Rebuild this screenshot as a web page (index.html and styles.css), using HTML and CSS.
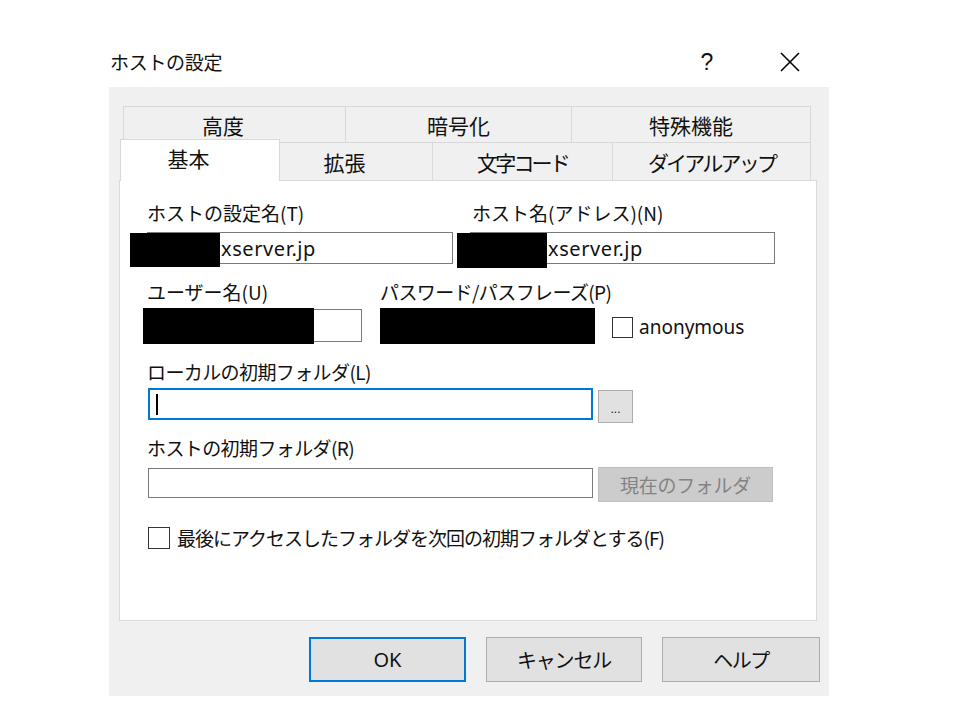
FILE: index.html
```html
<!DOCTYPE html>
<html lang="ja">
<head>
<meta charset="utf-8">
<title>ホストの設定</title>
<link rel="stylesheet" href="styles.css">
</head>
<body>
<div class="window">
  <div class="titlebar">
    <span class="title">ホストの設定</span>
    <span class="tb-help">?</span>
    <span class="tb-close"><svg width="20" height="20" viewBox="0 0 20 20"><path d="M1 1 L19 19 M19 1 L1 19" stroke="#000" stroke-width="1.6" fill="none"/></svg></span>
  </div>
  <div class="body">
    <div class="tabs">
      <div class="tabrow row1">
        <div class="tab w1a shift">高度</div>
        <div class="tab w1b">暗号化</div>
        <div class="tab w1c last">特殊機能</div>
      </div>
      <div class="tabrow row2">
        <div class="tab sel w2a shift">基本</div>
        <div class="tab w2b shift">拡張</div>
        <div class="tab w2c kana">文字コード</div>
        <div class="tab w2d last kana">ダイアルアップ</div>
      </div>
    </div>
    <div class="panel">
      <div class="row labels r-l1">
        <span class="lbl c-name">ホストの設定名(T)</span>
        <span class="lbl c-host">ホスト名(アドレス)(N)</span>
      </div>
      <div class="row r-i1">
        <div class="field f-name"><div class="input in-name"><span class="val">xserver.jp</span></div><span class="redact rd-name"></span></div>
        <div class="field f-host"><div class="input in-host"><span class="val">xserver.jp</span></div><span class="redact rd-host"></span></div>
      </div>
      <div class="row labels r-l2">
        <span class="lbl c-user">ユーザー名(U)</span>
        <span class="lbl tight">パスワード/パスフレーズ(P)</span>
      </div>
      <div class="row r-i2">
        <div class="field f-user"><div class="input in-user"></div><span class="redact rd-user"></span></div>
        <div class="field f-pass"><div class="input in-pass"></div><span class="redact rd-pass"></span></div>
        <label class="check anon"><span class="box b-anon"></span><span class="anon-text">anonymous</span></label>
      </div>
      <div class="row labels r-l3">
        <span class="lbl tight">ローカルの初期フォルダ(L)</span>
      </div>
      <div class="row r-i3">
        <div class="input in-local focus"><span class="caret"></span></div>
        <div class="btn small">...</div>
      </div>
      <div class="row labels r-l4">
        <span class="lbl tight">ホストの初期フォルダ(R)</span>
      </div>
      <div class="row r-i4">
        <div class="input in-remote"></div>
        <div class="btn disabled">現在のフォルダ</div>
      </div>
      <label class="row check r-chk"><span class="box b-last"></span><span class="lbl longlbl">最後にアクセスしたフォルダを次回の初期フォルダとする(F)</span></label>
    </div>
    <div class="buttons">
      <div class="btn dlg ok">OK</div>
      <div class="btn dlg cancel">キャンセル</div>
      <div class="btn dlg help">ヘルプ</div>
    </div>
  </div>
</div>
</body>
</html>
```
FILE: styles.css
```css
* { box-sizing: border-box; }
html, body { margin: 0; padding: 0; background: #ffffff; }
body {
  font-family: "Noto Sans CJK JP", "Noto Sans", sans-serif;
  color: #000;
  padding-top: 37px;
  width: 960px;
  height: 720px;
  overflow: hidden;
}
.window { margin-left: 109px; width: 720px; }
.titlebar {
  height: 50px;
  display: flex;
  align-items: center;
  padding-left: 1px;
  padding-right: 19px;
}
.title { font-size: 19px; line-height: 24px; flex: 1; color: #111; letter-spacing: -0.3px; }
.tb-help { width: 40px; text-align: center; font-size: 23px; line-height: 26px; font-family: "Liberation Sans", sans-serif; color: #111; }
.tb-close { width: 40px; margin-left: 43px; display: flex; justify-content: center; align-items: center; }

.body {
  background: #f0f0f0;
  height: 609px;
  padding-top: 19px;
  display: flex;
  flex-direction: column;
}
.tabs { margin-left: 11px; }
.tabrow { display: flex; }
.row1 { margin-left: 3px; height: 36px; }
.row2 { height: 38px; align-items: flex-end; }
.tab {
  background: #f0f0f0;
  border-top: 1px solid #d9d9d9;
  border-left: 1px solid #d9d9d9;
  font-size: 21px;
  display: flex;
  align-items: center;
  justify-content: center;
  color: #111;
}
.tab.shift { padding-right: 23px; }
.tab.kana { letter-spacing: -2.8px; }
.tab.last { border-right: 1px solid #d9d9d9; }
.row1 .tab { height: 36px; }
.row2 .tab { height: 38px; }
.w1a { width: 222px; }
.w1b { width: 226px; }
.w1c { width: 240px; }
.w2a { width: 160px; }
.w2b { width: 152px; }
.w2c { width: 180px; }
.w2d { width: 199px; }
.row2 .tab.sel {
  height: 42px;
  margin-bottom: -1px;
  background: #ffffff;
  border-right: 1px solid #d9d9d9;
  position: relative;
  z-index: 1;
  padding-bottom: 5px;
}
.row2 .tab.sel + .tab { border-left: none; }

.panel {
  margin-left: 10px;
  width: 698px;
  height: 441px;
  background: #ffffff;
  border: 1px solid #d9d9d9;
  padding-left: 27px;
}
.row { display: flex; align-items: flex-start; }
.lbl { font-size: 19px; line-height: 24px; white-space: nowrap; color: #111; }
.lbl.tight { letter-spacing: -0.6px; }
.lbl.longlbl { letter-spacing: -1px; }
.labels { height: 24px; }
.r-l1 { margin-top: 20px; }
.c-name { width: 325px; }
.c-user { width: 233px; }
.r-i1 { margin-top: 7px; height: 32px; }
.r-l2 { margin-top: 16px; }
.r-i2 { margin-top: 3px; height: 36px; align-items: center; }
.r-l3 { margin-top: 17px; }
.r-i3 { margin-top: 4px; height: 35px; }
.r-l4 { margin-top: 13px; }
.r-i4 { margin-top: 7px; height: 35px; }
.r-chk { margin-top: 25px; height: 22px; align-items: center; margin-left: 1px; }

.field { position: relative; }
.input {
  background: #fff;
  border: 1px solid #7a7a7a;
  display: flex;
  align-items: center;
}
.val { font-size: 20px; font-family: "Noto Sans", sans-serif; color: #111; letter-spacing: 0.6px; }
.in-name { width: 306px; height: 32px; padding-left: 73px; }
.f-host { margin-left: 17px; }
.in-host { width: 305px; height: 32px; padding-left: 77px; }
.redact { position: absolute; background: #000; }
.rd-name { left: -17px; top: 1px; width: 90px; height: 34px; }
.rd-host { left: -13px; top: 1px; width: 90px; height: 35px; }
.in-user { width: 215px; height: 33px; }
.rd-user { left: -4px; top: -1px; width: 171px; height: 36px; }
.f-pass { margin-left: 18px; }
.in-pass { width: 214px; height: 33px; }
.rd-pass { left: 0; top: -1px; width: 215px; height: 36px; }

.check { display: flex; align-items: center; }
.box { display: block; background: #fff; border: 1px solid #333; }
.anon { margin-left: 18px; margin-top: 4px; }
.b-anon { width: 21px; height: 21px; }
.anon-text { margin-left: 6px; font-size: 19px; font-family: "Noto Sans", sans-serif; line-height: 24px; letter-spacing: 0; color: #111; }
.b-last { width: 22px; height: 22px; margin-right: 7px; }

.in-local { width: 445px; height: 32px; margin-left: 1px; padding-left: 6px; }
.in-local.focus { border: 2px solid #0078d7; }
.caret { display: block; width: 2px; height: 21px; background: #000; }
.in-remote { width: 445px; height: 30px; margin-left: 1px; margin-top: 1px; }

.btn {
  display: flex;
  align-items: center;
  justify-content: center;
  background: #e1e1e1;
  border: 1px solid #adadad;
  font-size: 19px;
  color: #111;
  white-space: nowrap;
}
.btn.small { width: 35px; height: 33px; margin-left: 5px; margin-top: 2px; font-size: 12px; font-family: "Liberation Sans", sans-serif; padding-top: 4px; }
.btn.disabled { width: 175px; height: 35px; margin-left: 5px; background: #cccccc; border-color: #bfbfbf; color: #838383; letter-spacing: -0.3px; }

.panel + .buttons { margin-top: 16px; }
.buttons {
  display: flex;
  justify-content: flex-end;
  gap: 20px;
  padding-right: 9px;
}
.btn.dlg { height: 45px; font-size: 20px; }
.ok { width: 157px; border: 2px solid #0078d7; font-family: "Noto Sans", sans-serif; }
.cancel { width: 156px; letter-spacing: -1.2px; }
.help { width: 158px; letter-spacing: -1.5px; }
```
